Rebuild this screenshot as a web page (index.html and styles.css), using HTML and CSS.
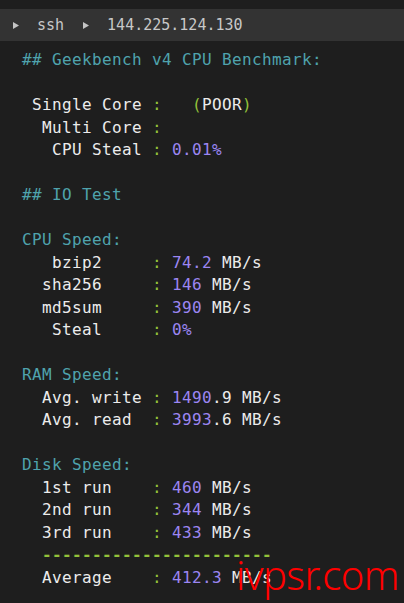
FILE: index.html
```html
<!DOCTYPE html>
<html>
<head>
<meta charset="utf-8">
<link rel="stylesheet" href="styles.css">
</head>
<body>
<div class="page">
  <div class="bar">
    <svg class="tri" width="6" height="7" viewBox="0 0 6 7"><path d="M0 0L6 3.5L0 7Z" fill="#c4c4c4"/></svg>
    <span class="crumb">ssh</span>
    <svg class="tri" width="6" height="7" viewBox="0 0 6 7"><path d="M0 0L6 3.5L0 7Z" fill="#c4c4c4"/></svg>
    <span class="crumb">144.225.124.130</span>
  </div>
  <div class="term">
    <div class="ln h">## Geekbench v4 CPU Benchmark:</div>
    <div class="ln"> </div>
    <div class="ln"> Single Core <span class="c">:</span>   <span class="c">(</span>POOR<span class="c">)</span></div>
    <div class="ln">  Multi Core <span class="c">:</span></div>
    <div class="ln">   CPU Steal <span class="c">:</span> <span class="n">0.01%</span></div>
    <div class="ln"> </div>
    <div class="ln h">## IO Test</div>
    <div class="ln"> </div>
    <div class="ln h">CPU Speed:</div>
    <div class="ln">   bzip2     <span class="c">:</span> <span class="n">74.2</span> MB/s</div>
    <div class="ln">  sha256     <span class="c">:</span> <span class="n">146</span> MB/s</div>
    <div class="ln">  md5sum     <span class="c">:</span> <span class="n">390</span> MB/s</div>
    <div class="ln">   Steal     <span class="c">:</span> <span class="n">0%</span></div>
    <div class="ln"> </div>
    <div class="ln h">RAM Speed:</div>
    <div class="ln">  Avg. write <span class="c">:</span> <span class="n">1490</span>.9 MB/s</div>
    <div class="ln">  Avg. read  <span class="c">:</span> <span class="n">3993</span>.6 MB/s</div>
    <div class="ln"> </div>
    <div class="ln h">Disk Speed:</div>
    <div class="ln">  1st run    <span class="c">:</span> <span class="n">460</span> MB/s</div>
    <div class="ln">  2nd run    <span class="c">:</span> <span class="n">344</span> MB/s</div>
    <div class="ln">  3rd run    <span class="c">:</span> <span class="n">433</span> MB/s</div>
    <div class="ln">  <span class="c dash">-----------------------</span></div>
    <div class="ln">  Average    <span class="c">:</span> <span class="n">412.3</span> MB/s</div>
  </div>
  <div class="mark">ivpsr.com</div>
</div>
</body>
</html>
```
FILE: styles.css
```css
html, body {
  margin: 0;
  padding: 0;
  background: #1e1e1e;
}
.page {
  position: relative;
  width: 404px;
  height: 603px;
  overflow: hidden;
  background: #1e1e1e;
  padding-top: 9px;
  box-sizing: border-box;
}
.bar {
  height: 32px;
  background: #333333;
  display: flex;
  align-items: center;
  padding-left: 13px;
  font-family: "DejaVu Sans Mono", monospace;
  font-size: 15px;
  color: #c8c8c8;
}
.tri {
  display: block;
  margin-top: 1px;
}
.crumb {
  margin-left: 18px;
  margin-right: 19px;
}
.term {
  margin-top: 8px;
  padding-left: 22px;
  font-family: "DejaVu Sans Mono", monospace;
  font-size: 16px;
  letter-spacing: 0.37px;
  line-height: 22.5px;
  color: #ececec;
}
.ln {
  white-space: pre;
  height: 22.5px;
}
.h { color: #4fa3ad; }
.c { color: #93c13a; }
.dash { font-weight: bold; }
.n { color: #9c86f2; }
.mark {
  position: absolute;
  left: 236px;
  top: 550px;
  font-family: "Noto Sans", sans-serif;
  font-weight: 300;
  font-size: 40px;
  letter-spacing: -0.6px;
  color: #ff0000;
  line-height: 50px;
}
```
